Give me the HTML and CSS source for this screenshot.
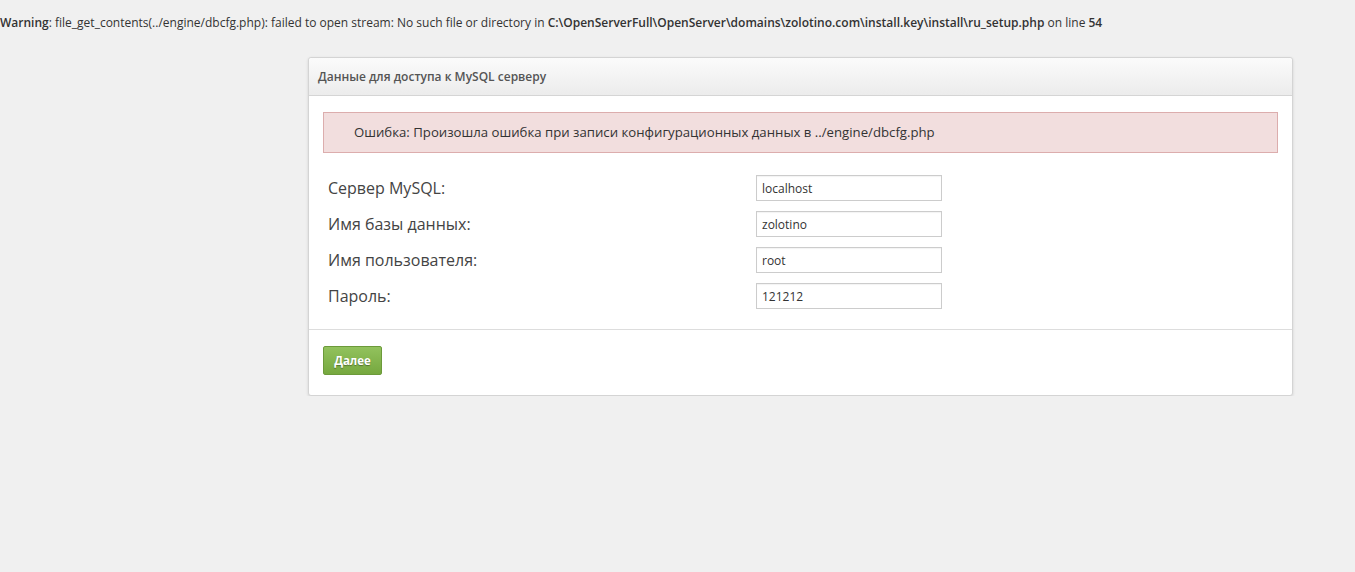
FILE: index.html
```html
<!DOCTYPE html>
<html lang="ru">
  <head>
    <meta charset="UTF-8">
    <title>Установка</title>
    <link rel="stylesheet" href="styles.css">
  </head>
  <body>
    <p class="php-warning"><b>Warning</b>: file_get_contents(../engine/dbcfg.php): failed to open stream: No such file or directory in <b>C:\OpenServerFull\OpenServer\domains\zolotino.com\install.key\install\ru_setup.php</b> on line <b>54</b></p>

    <form class="panel">
      <div class="panel-heading">Данные для доступа к MySQL серверу</div>
      <div class="panel-body">
        <div class="alert">Ошибка: Произошла ошибка при записи конфигурационных данных в ../engine/dbcfg.php</div>
        <div class="fields">
          <label for="dbhost">Сервер MySQL:</label>
          <input id="dbhost" type="text" value="localhost">
          <label for="dbname">Имя базы данных:</label>
          <input id="dbname" type="text" value="zolotino">
          <label for="dbuser">Имя пользователя:</label>
          <input id="dbuser" type="text" value="root">
          <label for="dbpasswd">Пароль:</label>
          <input id="dbpasswd" type="text" value="121212">
        </div>
      </div>
      <div class="panel-footer">
        <button type="submit" class="btn-green">Далее</button>
      </div>
    </form>
  </body>
</html>
```

FILE: styles.css
```css
*,
*::after,
*::before {
  box-sizing: border-box;
}

body {
  margin: 0;
  background: #f0f0f0;
  font-family: "Open Sans", "Noto Sans", sans-serif;
  color: #333;
}

.php-warning {
  margin: 0;
  padding: 14px 0 0;
  font-size: 12px;
  line-height: 18px;
  color: #333;
}

.php-warning b {
  font-weight: 600;
}

.panel {
  width: 985px;
  margin: 25px 0 0 308px;
  background: #fff;
  border: 1px solid #d4d4d4;
  border-radius: 3px;
  box-shadow: 0 1px 3px rgba(0, 0, 0, 0.12);
}

.panel-heading {
  height: 38px;
  padding: 0 9px;
  line-height: 37px;
  font-size: 12px;
  font-weight: 600;
  color: #555;
  background: linear-gradient(#fbfbfb, #ececec);
  border-bottom: 1px solid #d5d5d5;
  border-radius: 3px 3px 0 0;
}

.panel-body {
  padding: 16px 14px 20px;
  border-bottom: 1px solid #ddd;
}

.alert {
  height: 41px;
  padding: 0 30px;
  line-height: 39px;
  font-size: 13.2px;
  color: #333;
  background: #f2dede;
  border: 1px solid #dcadad;
}

.fields {
  display: grid;
  grid-template-columns: 433px 186px;
  row-gap: 10px;
  align-items: center;
  margin-top: 22px;
}

.fields label {
  padding-left: 5px;
  font-size: 16px;
  color: #444;
}

.fields input {
  width: 186px;
  height: 26px;
  padding: 0 5px;
  font: 12px "Open Sans", "Noto Sans", sans-serif;
  color: #333;
  background: #fff;
  border: 1px solid #ccc;
  box-shadow: inset 0 1px 1px rgba(0, 0, 0, 0.05);
}

.panel-footer {
  padding: 16px 14px 20px;
}

.btn-green {
  width: 59px;
  height: 29px;
  padding: 0;
  font: 700 11.5px "Open Sans", "Noto Sans", sans-serif;
  color: #fff;
  text-shadow: 0 1px 1px rgba(0, 0, 0, 0.35);
  background: linear-gradient(#92c25d, #76a83f);
  border: 1px solid #6c9a3a;
  border-radius: 2px;
}
```
